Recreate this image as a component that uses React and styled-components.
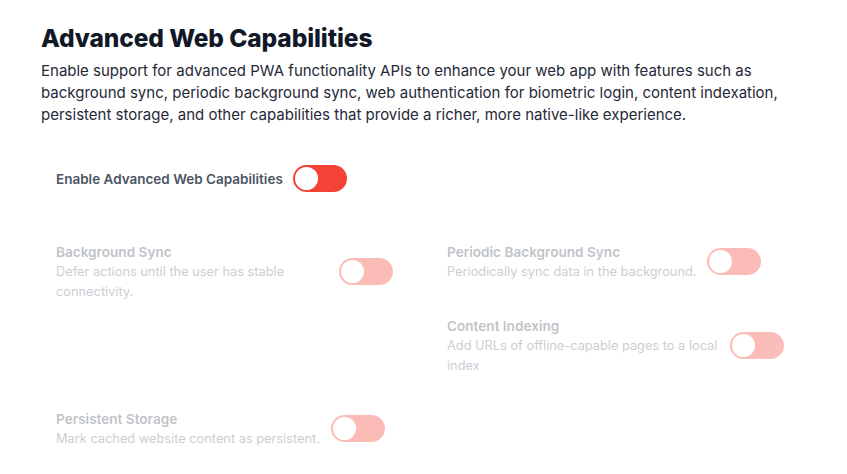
import styled, { createGlobalStyle } from 'styled-components';

const GlobalStyle = createGlobalStyle`
  body {
    margin: 0;
    background: #ffffff;
    font-family: Inter, "Noto Sans", sans-serif;
  }
`;

const Page = styled.div`
  padding: 23px 41px 0 41px;
`;

const Title = styled.h2`
  margin: 0;
  font-size: 24.5px;
  line-height: 30px;
  font-weight: 800;
  color: #111827;
  letter-spacing: -0.1px;
`;

const Lead = styled.p`
  margin: 7px 0 0 0;
  font-size: 15px;
  line-height: 22px;
  color: #1f2937;
  max-width: 780px;
`;

const MainRow = styled.div`
  display: flex;
  align-items: center;
  gap: 10px;
  margin: 39px 0 0 15px;
`;

const MainLabel = styled.span`
  font-size: 13.5px;
  font-weight: 600;
  color: #4b5563;
`;

const Grid = styled.div`
  display: grid;
  grid-template-columns: 391px 391px;
  align-items: start;
  row-gap: 15px;
  margin: 50px 0 0 15px;
  opacity: 0.35;
`;

const Item = styled.div`
  display: flex;
  align-items: center;
  gap: 11px;
`;

const Spacer = styled.div`
  height: 78px;
`;

const Text = styled.div`
  max-width: 272px;
`;

const ItemTitle = styled.div`
  font-size: 13.6px;
  line-height: 20px;
  font-weight: 600;
  color: #4b5563;
`;

const ItemDesc = styled.div`
  font-size: 12.8px;
  line-height: 19.5px;
  color: #6b7280;
`;

const Switch = styled.span`
  flex: none;
  display: inline-flex;
  align-items: center;
  box-sizing: border-box;
  width: 54px;
  height: 27px;
  padding: 2px;
  border-radius: 999px;
  background: #f44336;
`;

const Knob = styled.span`
  width: 23px;
  height: 23px;
  border-radius: 50%;
  background: #ffffff;
`;

const Toggle = () => (
  <Switch>
    <Knob />
  </Switch>
);

const Capability = ({ title, desc }) => (
  <Item>
    <Text>
      <ItemTitle>{title}</ItemTitle>
      <ItemDesc>{desc}</ItemDesc>
    </Text>
    <Toggle />
  </Item>
);

export default function App() {
  return (
    <>
      <GlobalStyle />
      <Page>
        <Title>Advanced Web Capabilities</Title>
        <Lead>
          Enable support for advanced PWA functionality APIs to enhance your web app with features such as
          background sync, periodic background sync, web authentication for biometric login, content indexation,
          persistent storage, and other capabilities that provide a richer, more native-like experience.
        </Lead>
        <MainRow>
          <MainLabel>Enable Advanced Web Capabilities</MainLabel>
          <Toggle />
        </MainRow>
        <Grid>
          <Capability
            title="Background Sync"
            desc="Defer actions until the user has stable connectivity."
          />
          <Capability
            title="Periodic Background Sync"
            desc="Periodically sync data in the background."
          />
          <Spacer />
          <Capability
            title="Content Indexing"
            desc="Add URLs of offline-capable pages to a local index"
          />
          <Capability
            title="Persistent Storage"
            desc="Mark cached website content as persistent."
          />
        </Grid>
      </Page>
    </>
  );
}
